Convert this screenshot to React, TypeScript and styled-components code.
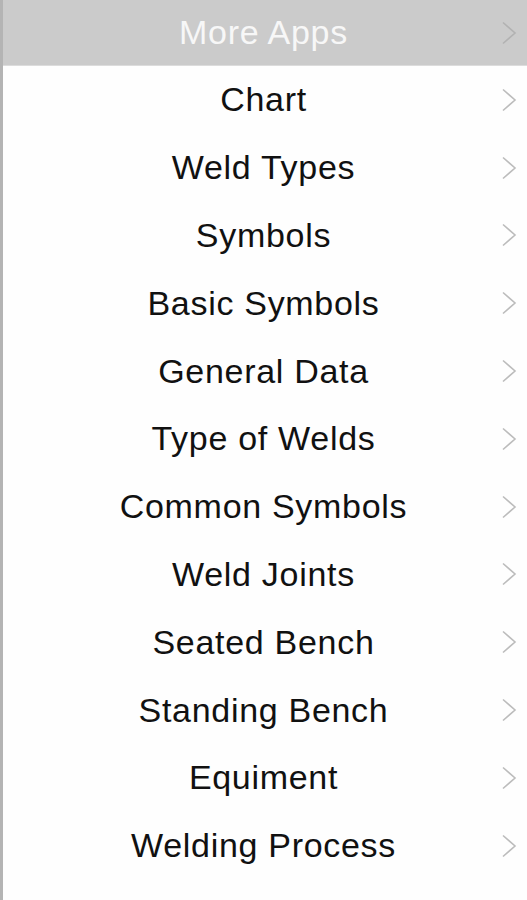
import styled, { createGlobalStyle } from 'styled-components';

const items = [
  'Chart',
  'Weld Types',
  'Symbols',
  'Basic Symbols',
  'General Data',
  'Type of Welds',
  'Common Symbols',
  'Weld Joints',
  'Seated Bench',
  'Standing Bench',
  'Equiment',
  'Welding Process',
];

const GlobalStyle = createGlobalStyle`
  html, body {
    margin: 0;
    padding: 0;
    background: #fefefe;
  }
  body {
    font-family: "Liberation Sans", Arial, Helvetica, sans-serif;
  }
`;

const Screen = styled.div`
  width: 527px;
  height: 900px;
  box-sizing: border-box;
  border-left: 3px solid #b4b4b4;
  background: #fefefe;
  display: flex;
  flex-direction: column;
  overflow: hidden;
`;

const Row = styled.div<{ $header?: boolean }>`
  position: relative;
  height: ${(p) => (p.$header ? '66px' : '67.8px')};
  flex: none;
  display: flex;
  align-items: center;
  justify-content: center;
  background: ${(p) => (p.$header ? '#cbcbcb' : 'transparent')};
  border-bottom: ${(p) => (p.$header ? '1px solid #dcdcdc' : 'none')};
  box-sizing: border-box;
`;

const Label = styled.span<{ $header?: boolean }>`
  font-size: 34px;
  letter-spacing: 0.7px;
  color: ${(p) => (p.$header ? '#f7f7f7' : '#111111')};
  margin-left: -3px;
`;

const Chevron = styled.svg`
  position: absolute;
  right: 10px;
  top: 50%;
  margin-top: -12px;
  width: 16px;
  height: 24px;
`;

function Arrow({ color }: { color: string }) {
  return (
    <Chevron viewBox="0 0 16 24">
      <polyline points="2,1.5 14,12 2,22.5" fill="none" stroke={color} strokeWidth="1.6" />
    </Chevron>
  );
}

export default function App() {
  return (
    <>
      <GlobalStyle />
      <Screen>
        <Row $header>
          <Label $header>More Apps</Label>
          <Arrow color="#b2b2b2" />
        </Row>
        {items.map((item) => (
          <Row key={item}>
            <Label>{item}</Label>
            <Arrow color="#bcbcbc" />
          </Row>
        ))}
      </Screen>
    </>
  );
}
